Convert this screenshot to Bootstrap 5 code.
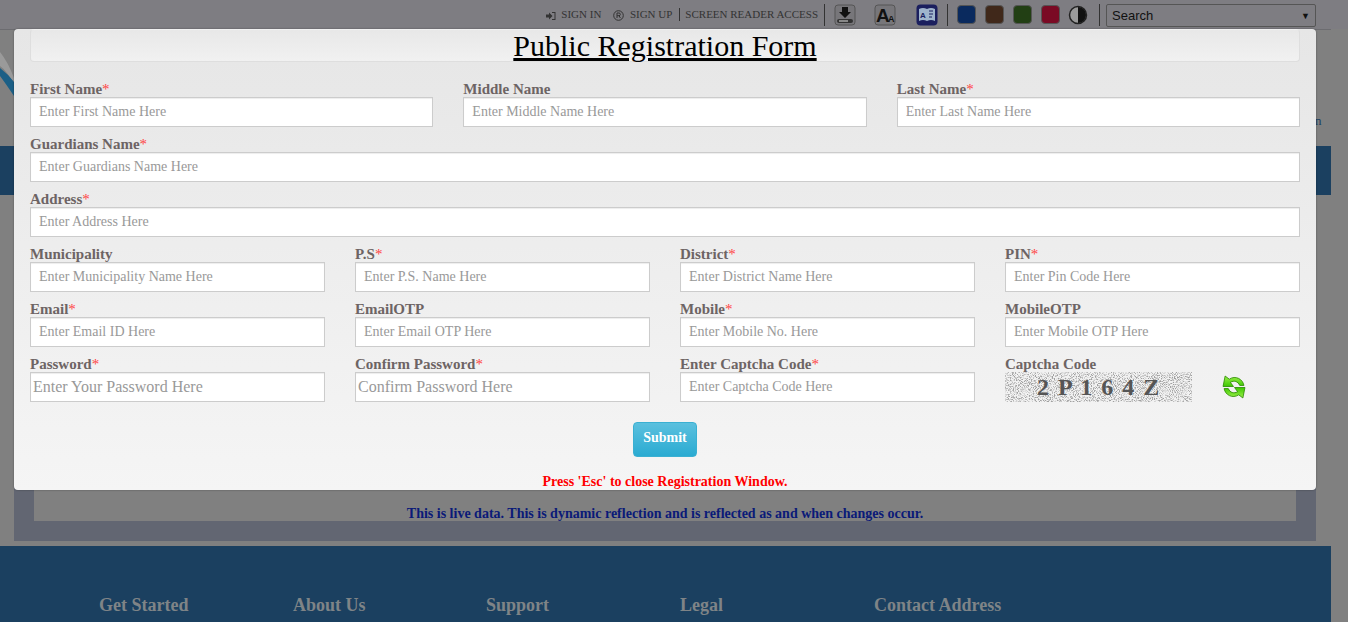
<!DOCTYPE html>
<html lang="en"><head><meta charset="utf-8"><title>Public Registration Form</title>
<link href="https://cdn.jsdelivr.net/npm/bootstrap@5.3.0/dist/css/bootstrap.min.css" rel="stylesheet">
<style>
html,body{height:622px;overflow:hidden}
body{background:#808080;font-family:"Liberation Serif",serif;position:relative}
.pg-wrap{width:1331px}
.top-strip{height:29px;background:#7e7d82;width:1348px;padding-right:32px;color:#333;font-size:11px}
.lnk{white-space:nowrap}
.sep{width:1px;height:22px;background:#333;flex:none}
.sep-short{height:13px}
.ico{display:block;flex:none}
.sw{width:19px;height:19px;border-radius:4px;border:1px solid #555;flex:none;margin-left:9px}
.sw-a{background:#0a2a5e}.sw-b{background:#40281a}.sw-c{background:#223f14}.sw-d{background:#7a0a24}
.mg5{margin-left:5px}.mg6{margin-left:6px}.mg7{margin-left:7px}.mg8{margin-left:8px}.mg9{margin-left:9px}.mg11{margin-left:11px}.mg12{margin-left:12px}.mg18{margin-left:18px}.mg20{margin-left:20px}
.fakesel{width:210px;height:23px;margin-top:2px;border:1px solid #555;border-radius:2px;font:13px "Liberation Sans",sans-serif;color:#111;padding:0 5px}
.sel-arrow{font-size:9px}
.hdr-zone{height:117px;position:relative;border-top:1px solid #6c6c70}
.swoosh{position:absolute;left:0;top:20px}
.stray{position:absolute;left:1315px;top:81px;font-size:13px;color:#1b4060}
.blue-band{height:49px;background:#1b4060}
.panel-out{margin:0 15px 5px 14px;height:346px;background:#626672;padding:0 20px}
.panel-in{height:326px;background:#808080;display:flex;align-items:flex-end;justify-content:center}
.live{color:#0a1a78;font-weight:700;font-size:14px;line-height:16px;margin-bottom:-1px}
.foot{height:76px;background:#1b4060;color:#7f8487;font-weight:700;font-size:18px;padding-top:49px;padding-left:99px}
.foot span{line-height:21px}
.fc1{width:194px}.fc2{width:193px}.fc3{width:194px}.fc4{width:194px}
.reg-box{position:absolute;left:14px;top:29px;width:1302px;height:461px;border-radius:4px;background:linear-gradient(#e6e6e6,#f5f5f5);padding:0 16px;box-shadow:0 0 2px rgba(0,0,0,.4)}
.ttl{height:33px;border:1px solid #dedede;border-top-color:transparent;border-radius:4px;background:linear-gradient(#e8e8e8,#f1f1f1);text-align:center;font-size:30px;line-height:32px;color:#000;margin-bottom:19px}
.ttl u{text-underline-offset:2px}
.frow{display:flex;gap:30px;height:55px}
.fld{flex:1 1 0;min-width:0}
.fld label{display:block;font-size:15px;font-weight:700;color:#6d6464;line-height:16px;height:16px;margin:0;white-space:nowrap}
.fld label i{color:#f44;font-style:normal;font-weight:400}
.fld input{display:block;width:100%;height:30px;border:1px solid #ccc;border-radius:0;background:#fff;padding:0 8px;font-size:14px;font-family:"Liberation Serif",serif;outline:0;box-shadow:inset 0 1px 1px rgba(0,0,0,.075)}
.fld input::placeholder{color:#999;opacity:1}
.fld input.bigger{font-size:16px;padding:0 2px}
.cap-row{display:flex;align-items:center;gap:30px;height:30px}
.cap-img{position:relative;width:187px;height:30px;flex:none}
.cap-noise{position:absolute;left:0;top:0}
.cap-txt{position:absolute;left:32px;top:0;line-height:30px;font-size:24px;font-weight:700;color:#555;letter-spacing:1.5px;white-space:pre}
.sub-wrap{text-align:center;margin-top:11px}
.sub-btn{width:64px;height:35px;padding:0 0 4px;border:1px solid #3ab0d2;border-radius:4px;background:linear-gradient(#5bc0de,#2aabd2);color:#fff;font-weight:700;font-size:14px;font-family:"Liberation Serif",serif}
.esc{text-align:center;color:#f00;font-weight:700;font-size:14px;line-height:16px;margin:17px 0 0}
</style></head><body>
<div class="top-strip d-flex align-items-center justify-content-end">
  <span class="lnk"><svg width="10" height="10" viewBox="0 0 10 10"><path d="M0 3.500h3V1.500L6.500 5 3 8.500V6.500H0zM6 1h3.500v8H6V8h2.500V2H6z" fill="#333"/></svg>&nbsp; SIGN IN</span>
  <span class="lnk mg12"><svg width="11" height="11" viewBox="0 0 11 11"><circle cx="5.500" cy="5.500" r="4.800" fill="none" stroke="#333"/><path d="M4 8V3h2a1.300 1.300 0 0 1 0 2.700H4M6 5.700 7.400 8" fill="none" stroke="#333"/></svg>&nbsp; SIGN UP</span>
  <span class="sep sep-short mg7"></span>
  <span class="lnk mg5">SCREEN READER ACCESS</span>
  <span class="sep mg6"></span>
  <svg class="ico mg9" width="22" height="22" viewBox="0 0 22 22"><rect x="1" y="1" width="20" height="20" rx="3" fill="#77767a" stroke="#555"/><path d="M8 3h6v5h3l-6 6-6-6h3z" fill="#111"/><rect x="3" y="15" width="16" height="4" rx="2" fill="#333"/><rect x="5" y="16" width="9" height="2" fill="#888"/></svg>
  <svg class="ico mg18" width="22" height="22" viewBox="0 0 22 22"><rect x="1" y="1" width="20" height="20" rx="3" fill="#77767a" stroke="#555"/><text x="2" y="18" font-family="Liberation Sans" font-weight="700" font-size="19" fill="#111">A</text><text x="14" y="18" font-family="Liberation Sans" font-weight="700" font-size="9" fill="#111">A</text></svg>
  <svg class="ico mg20" width="22" height="22" viewBox="0 0 22 22"><rect x="0.500" y="0.500" width="21" height="21" rx="4" fill="#1b1f5e"/><path d="M3 5q4-2 8 0q4-2 8 0v12q-4-2-8 0q-4-2-8 0z" fill="#9fb4cc"/><text x="4" y="14" font-family="Liberation Sans" font-weight="700" font-size="8" fill="#1b1f5e">A</text><path d="M13 7h4M13 10h4M13 13h3" stroke="#1b1f5e"/></svg>
  <span class="sep mg9"></span>
  <span class="sw sw-a"></span>
  <span class="sw sw-b"></span>
  <span class="sw sw-c"></span>
  <span class="sw sw-d"></span>
  <svg class="ico mg8" width="20" height="20" viewBox="0 0 20 20"><circle cx="10" cy="10" r="8.500" fill="#9a9a9a" stroke="#222" stroke-width="1.500"/><path d="M10 2a8 8 0 0 1 0 16z" fill="#111"/></svg>
  <span class="sep mg11"></span>
  <div class="fakesel mg6 d-flex align-items-center justify-content-between"><span>Search</span><span class="sel-arrow">&#9660;</span></div>
</div>
<div class="pg-wrap">
  <div class="hdr-zone">
    <svg class="swoosh" width="14" height="50" viewBox="0 0 14 50"><path d="M0 2Q8 12 14 28V34Q6 20 0 16z" fill="#9a9a9a"/><path d="M0 18Q8 24 14 32V46Q6 34 0 26z" fill="#1b5f86"/></svg>
    <span class="stray">n</span>
  </div>
  <div class="blue-band"></div>
  <div class="panel-out"><div class="panel-in"><p class="live">This is live data. This is dynamic reflection and is reflected as and when changes occur.</p></div></div>
  <div class="foot d-flex"><span class="fc1 d-block">Get Started</span><span class="fc2 d-block">About Us</span><span class="fc3 d-block">Support</span><span class="fc4 d-block">Legal</span><span class="d-block">Contact Address</span></div>
</div>
<div class="reg-box">
  <div class="ttl"><u>Public Registration Form</u></div>
  <div class="frow">
    <div class="fld"><label>First Name<i>*</i></label><input placeholder="Enter First Name Here"></div>
    <div class="fld"><label>Middle Name</label><input placeholder="Enter Middle Name Here"></div>
    <div class="fld"><label>Last Name<i>*</i></label><input placeholder="Enter Last Name Here"></div>
  </div>
  <div class="frow"><div class="fld"><label>Guardians Name<i>*</i></label><input placeholder="Enter Guardians Name Here"></div></div>
  <div class="frow"><div class="fld"><label>Address<i>*</i></label><input placeholder="Enter Address Here"></div></div>
  <div class="frow">
    <div class="fld"><label>Municipality</label><input placeholder="Enter Municipality Name Here"></div>
    <div class="fld"><label>P.S<i>*</i></label><input placeholder="Enter P.S. Name Here"></div>
    <div class="fld"><label>District<i>*</i></label><input placeholder="Enter District Name Here"></div>
    <div class="fld"><label>PIN<i>*</i></label><input placeholder="Enter Pin Code Here"></div>
  </div>
  <div class="frow">
    <div class="fld"><label>Email<i>*</i></label><input placeholder="Enter Email ID Here"></div>
    <div class="fld"><label>EmailOTP</label><input placeholder="Enter Email OTP Here"></div>
    <div class="fld"><label>Mobile<i>*</i></label><input placeholder="Enter Mobile No. Here"></div>
    <div class="fld"><label>MobileOTP</label><input placeholder="Enter Mobile OTP Here"></div>
  </div>
  <div class="frow">
    <div class="fld"><label>Password<i>*</i></label><input class="bigger" type="text" placeholder="Enter Your Password Here"></div>
    <div class="fld"><label>Confirm Password<i>*</i></label><input class="bigger" type="text" placeholder="Confirm Password Here"></div>
    <div class="fld"><label>Enter Captcha Code<i>*</i></label><input placeholder="Enter Captcha Code Here"></div>
    <div class="fld"><label>Captcha Code</label>
      <div class="cap-row">
        <div class="cap-img">
          <svg class="cap-noise" width="187" height="30"><filter id="capn" x="0" y="0" width="100%" height="100%"><feTurbulence type="fractalNoise" baseFrequency="0.95" numOctaves="2" seed="7"/><feColorMatrix type="matrix" values="0 0 0 0 .35 0 0 0 0 .35 0 0 0 0 .35 4 0 0 0 -1.800"/></filter><rect width="187" height="30" fill="#f2f2f2"/><rect width="187" height="30" filter="url(#capn)"/></svg>
          <span class="cap-txt">2 P 1 6 4 Z</span>
        </div>
        <svg width="24" height="24" viewBox="0 0 23 23"><defs><linearGradient id="gr" x1="0" y1="0" x2="0" y2="1"><stop offset="0" stop-color="#9cf04a"/><stop offset="1" stop-color="#3cc800"/></linearGradient></defs><g fill="url(#gr)" stroke="#2a8a00" stroke-width=".8"><path d="M21 10C20 4 13 0 7 4L3 1 1 11H11L8 7C12 5 15 6 17 10Z"/><path transform="rotate(180 11.500 11.500)" d="M21 10C20 4 13 0 7 4L3 1 1 11H11L8 7C12 5 15 6 17 10Z"/></g></svg>
      </div>
    </div>
  </div>
  <div class="sub-wrap"><button type="button" class="sub-btn">Submit</button></div>
  <p class="esc">Press 'Esc' to close Registration Window.</p>
</div>
</body></html>
